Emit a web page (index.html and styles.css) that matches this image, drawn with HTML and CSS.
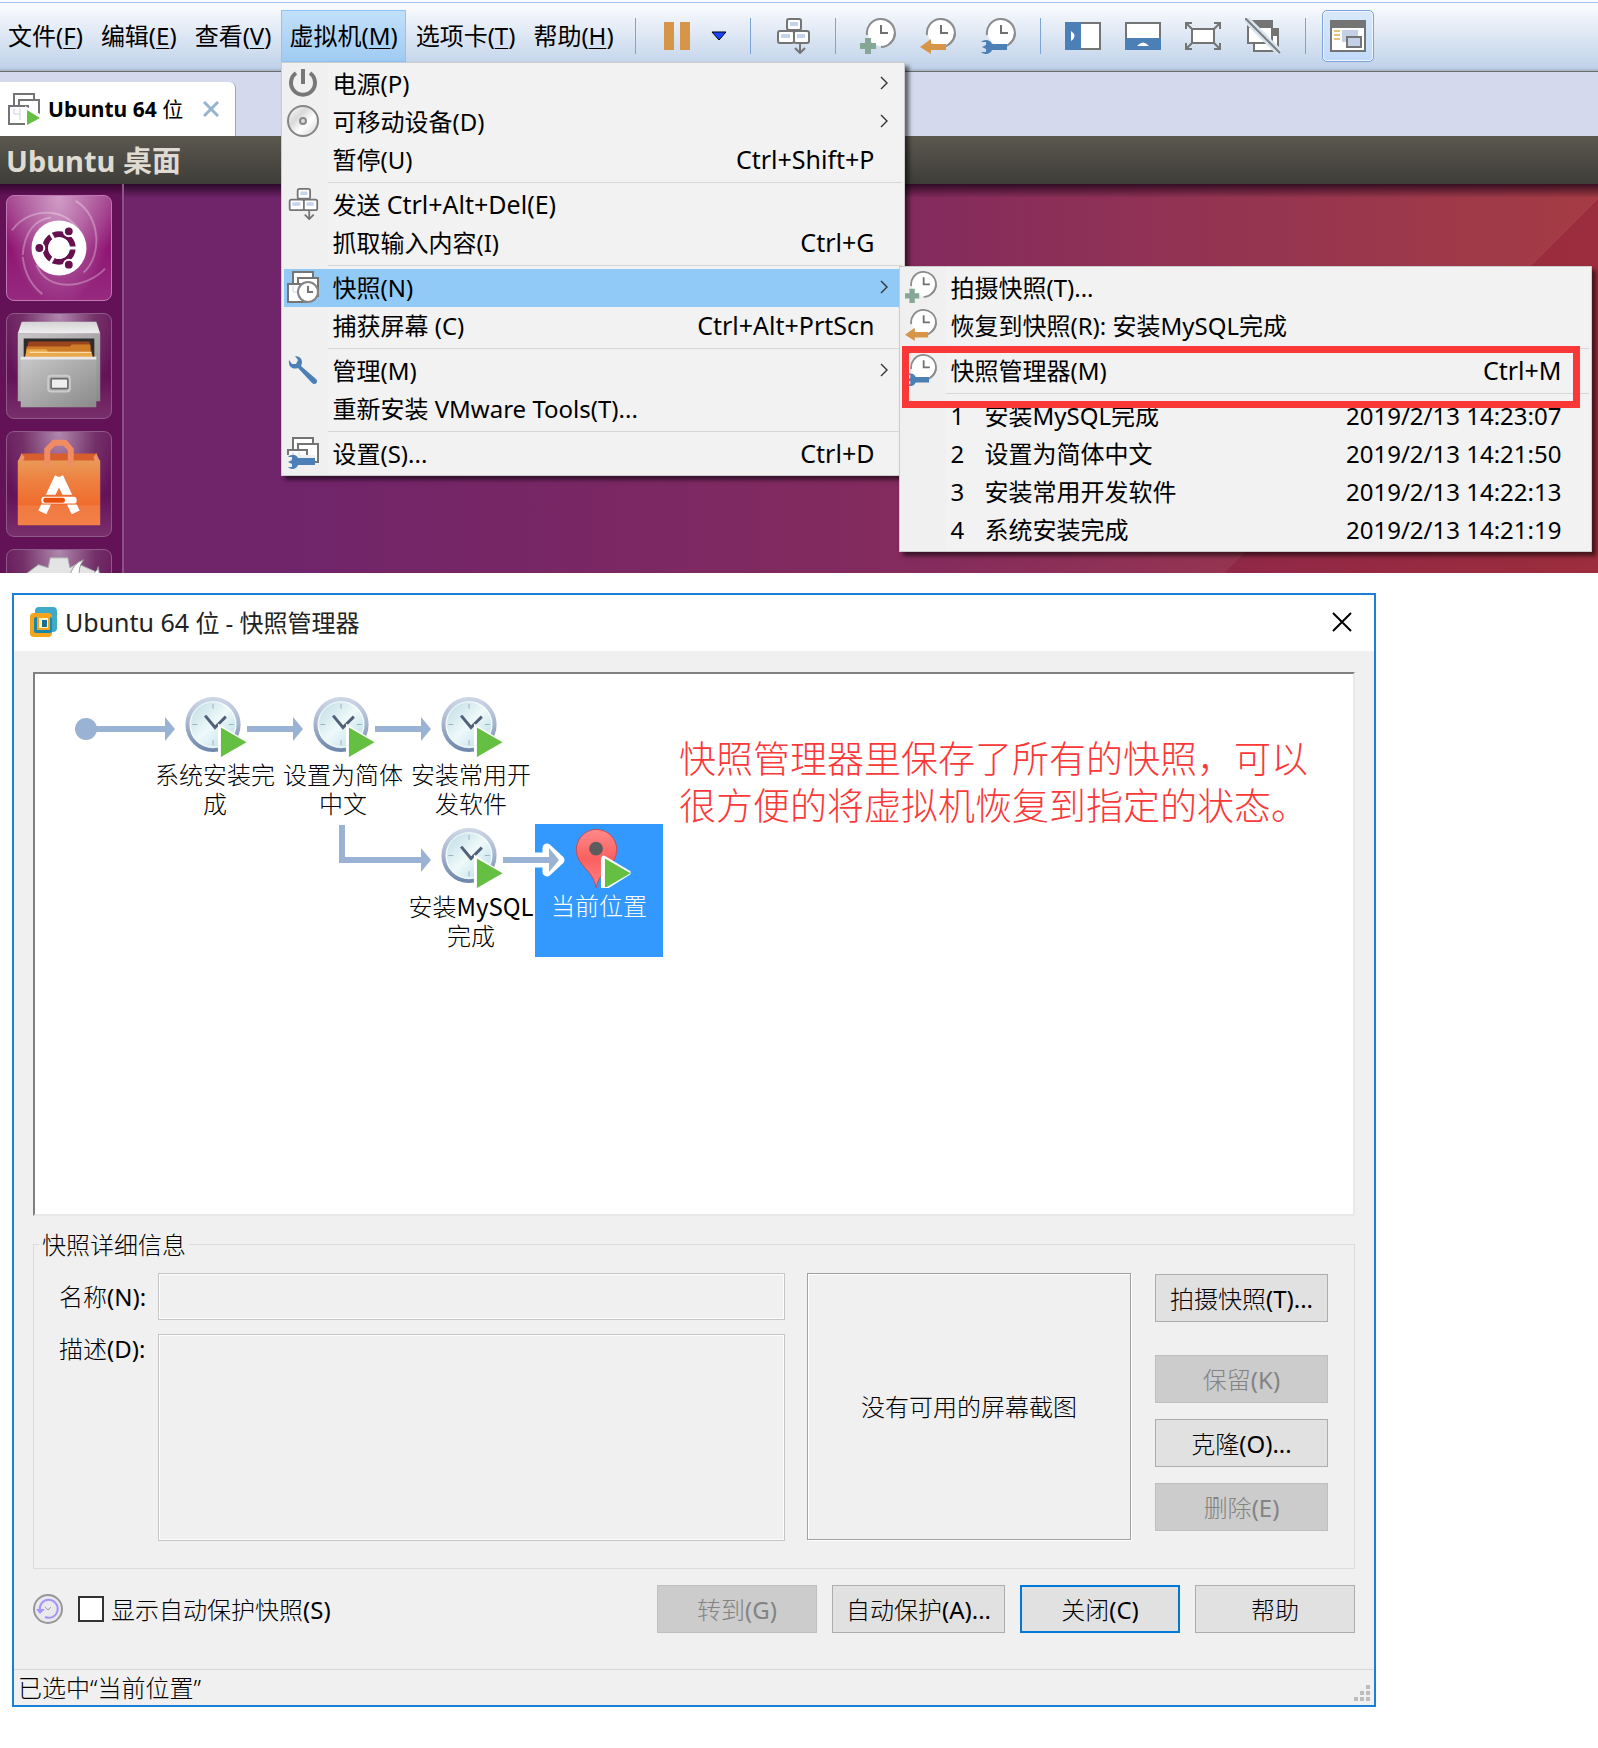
FILE: index.html
```html
<!DOCTYPE html>
<html lang="zh-CN">
<head>
<meta charset="utf-8">
<title>Ubuntu 64 位 - 快照管理器</title>
<link rel="stylesheet" href="styles.css">
</head>
<body>
<svg class="defs" aria-hidden="true">
  <defs>
    <linearGradient id="glass" x1="0" y1="0" x2="1" y2="1"><stop offset="0" stop-color="#b4d6e0"/><stop offset=".5" stop-color="#eef9fa"/><stop offset="1" stop-color="#aed7e2"/></linearGradient>
    <linearGradient id="rim" x1="0" y1="0" x2="0" y2="1"><stop offset="0" stop-color="#ccd6e6"/><stop offset=".45" stop-color="#a9b7ce"/><stop offset="1" stop-color="#6f87ad"/></linearGradient>
    <linearGradient id="pin" x1="0" y1="0" x2="0" y2="1"><stop offset="0" stop-color="#ff8a8a"/><stop offset=".5" stop-color="#fb6060"/><stop offset="1" stop-color="#ff8080"/></linearGradient>
    <linearGradient id="metal" x1="0" y1="0" x2="1" y2="1"><stop offset="0" stop-color="#c8c8c8"/><stop offset="1" stop-color="#8a8a8a"/></linearGradient>
    <linearGradient id="lid" x1="0" y1="0" x2="0" y2="1"><stop offset="0" stop-color="#d4d4d4"/><stop offset="1" stop-color="#f0f0f0"/></linearGradient>
    <linearGradient id="bag" x1="0" y1="0" x2="0" y2="1"><stop offset="0" stop-color="#e99a58"/><stop offset=".3" stop-color="#ee8141"/><stop offset=".68" stop-color="#ef6c2c"/><stop offset=".7" stop-color="#f07a40"/><stop offset="1" stop-color="#f38048"/></linearGradient>
    <linearGradient id="disc" x1="0" y1="0" x2="1" y2="1"><stop offset="0" stop-color="#fff"/><stop offset=".35" stop-color="#d9d9d9"/><stop offset=".6" stop-color="#fff"/><stop offset="1" stop-color="#d0d0d0"/></linearGradient>
  </defs>
  <symbol id="i-clock" viewBox="0 0 36 36">
    <circle cx="21" cy="15" r="13" fill="#fff"/>
    <path d="M7 17A14 14 0 1 1 21 29" fill="none" stroke="#8c8c8c" stroke-width="2"/>
    <path d="M35 15A14 14 0 0 1 29 26" fill="none" stroke="#8c8c8c" stroke-width="2"/>
    <path d="M21 7V15H28" fill="none" stroke="#707070" stroke-width="2"/>
  </symbol>
  <symbol id="i-take" viewBox="0 0 36 36">
    <use href="#i-clock"/><path d="M0 28H16M8 20V36" stroke="#86a796" stroke-width="6" fill="none"/>
  </symbol>
  <symbol id="i-revert" viewBox="0 0 36 36">
    <use href="#i-clock"/><path d="M0 29L11 21V26H26V32H11V36Z" fill="#d7954a"/>
  </symbol>
  <symbol id="i-manager" viewBox="0 0 36 36">
    <use href="#i-clock"/><path d="M1 24C4 21 10 21 12 26H27V32H12C10 37 4 37 1 34H6V31L2 29L6 27V24Z" fill="#4b7fb5"/>
  </symbol>
  <symbol id="i-keys" viewBox="0 0 36 36">
    <g fill="#fff" stroke="#747474" stroke-width="2"><rect x="12" y="1" width="14" height="11" rx="2"/><rect x="3" y="13" width="16" height="12" rx="2"/><rect x="19" y="13" width="15" height="12" rx="2"/></g>
    <path d="M15 6H23M6 18H15M22 18H30" stroke="#c5d4eb" stroke-width="4"/>
    <path d="M25 26V34M20 30L25 35L30 30" fill="none" stroke="#747474" stroke-width="2"/>
  </symbol>
  <symbol id="i-boxes" viewBox="0 0 32 32">
    <g fill="#fff" stroke="#747474" stroke-width="2"><rect x="6" y="1" width="20" height="16"/><rect x="11" y="7" width="20" height="18"/><rect x="1" y="13" width="19" height="18"/></g>
    <path d="M6 15V21H12M12 15V27" fill="none" stroke="#c5d4eb" stroke-width="1"/>
  </symbol>
  <symbol id="i-clocknode" viewBox="0 0 128 68">
    <circle cx="62" cy="32" r="26" fill="url(#glass)" stroke="url(#rim)" stroke-width="4"/>
    <circle cx="62" cy="32" r="23" fill="none" stroke="#fff" stroke-width="1" opacity=".8"/>
    <path d="M62 11V16M62 48V53M41 32H46M78 32H83" stroke="#9db0c0" stroke-width="1"/>
    <path d="M54 23L64 35L75 24" fill="none" stroke="#526079" stroke-width="3"/>
    <path d="M67 31L98 50L80 64H67Z" fill="#fff"/><path d="M70 35L96 50L70 65Z" fill="#64bf43"/>
  </symbol>
  <symbol id="i-chev" viewBox="0 0 8 14"><path d="M1 1L7 7L1 13" fill="none" stroke="#333" stroke-width="1.4"/></symbol>
</svg>

<div class="vm">
  <header class="topbar">
    <nav class="menubar">
      <div class="menu"><button>文件(<u>F</u>)</button></div>
      <div class="menu"><button>编辑(<u>E</u>)</button></div>
      <div class="menu"><button>查看(<u>V</u>)</button></div>
      <div class="menu"><button class="open">虚拟机(<u>M</u>)</button>
        <ul class="popup popup-main">
          <li><button><span class="ico"><svg viewBox="0 0 32 32"><path d="M9 6A12 12 0 1 0 23 6" fill="none" stroke="#777" stroke-width="4"/><path d="M16 2V17" stroke="#777" stroke-width="4"/></svg></span><span class="txt">电源(P)</span><svg class="chev"><use href="#i-chev"/></svg></button></li>
          <li><button><span class="ico"><svg viewBox="0 0 32 32"><circle cx="16" cy="16" r="15" fill="url(#disc)" stroke="#858585" stroke-width="2"/><circle cx="16" cy="16" r="3" fill="#ddd" stroke="#888" stroke-width="2"/></svg></span><span class="txt">可移动设备(D)</span><svg class="chev"><use href="#i-chev"/></svg></button></li>
          <li><button><span class="ico"></span><span class="txt">暂停(U)</span><kbd>Ctrl+Shift+P</kbd></button></li>
          <li class="line"></li>
          <li><button><span class="ico"><svg><use href="#i-keys"/></svg></span><span class="txt">发送 <kbd>Ctrl+Alt+Del(E)</kbd></span></button></li>
          <li><button><span class="ico"></span><span class="txt">抓取输入内容(I)</span><kbd>Ctrl+G</kbd></button></li>
          <li class="line"></li>
          <li class="sub"><button class="hot"><span class="ico"><svg viewBox="0 0 32 32"><use href="#i-boxes" width="32" height="32"/><circle cx="21" cy="21" r="10" fill="#fff" stroke="#858585" stroke-width="2"/><path d="M21 15V21H26" fill="none" stroke="#747474" stroke-width="2"/></svg></span><span class="txt">快照(N)</span><svg class="chev"><use href="#i-chev"/></svg></button>
            <ul class="popup popup-sub">
              <li><button><span class="ico"><svg><use href="#i-take"/></svg></span><span class="txt">拍摄快照(T)...</span></button></li>
              <li><button><span class="ico"><svg><use href="#i-revert"/></svg></span><span class="txt">恢复到快照(R): 安装MySQL完成</span></button></li>
              <li class="line"></li>
              <li><button><span class="ico"><svg><use href="#i-manager"/></svg></span><span class="txt">快照管理器(M)</span><kbd>Ctrl+M</kbd></button></li>
              <li class="line"></li>
              <li><button><span class="ico"></span><span class="num">1</span><span class="txt">安装MySQL完成</span><time>2019/2/13 14:23:07</time></button></li>
              <li><button><span class="ico"></span><span class="num">2</span><span class="txt">设置为简体中文</span><time>2019/2/13 14:21:50</time></button></li>
              <li><button><span class="ico"></span><span class="num">3</span><span class="txt">安装常用开发软件</span><time>2019/2/13 14:22:13</time></button></li>
              <li><button><span class="ico"></span><span class="num">4</span><span class="txt">系统安装完成</span><time>2019/2/13 14:21:19</time></button></li>
              <li class="redbox" aria-hidden="true"></li>
            </ul>
          </li>
          <li><button><span class="ico"></span><span class="txt">捕获屏幕 (C)</span><kbd>Ctrl+Alt+PrtScn</kbd></button></li>
          <li class="line"></li>
          <li><button><span class="ico"><svg viewBox="0 0 32 32"><path d="M8 2L11 6L9 10L5 10L2 6C1 13 6 16 11 14L25 29C28 32 32 28 29 25L14 12C17 6 13 2 8 2Z" fill="#4b7fb5"/></svg></span><span class="txt">管理(M)</span><svg class="chev"><use href="#i-chev"/></svg></button></li>
          <li><button><span class="ico"></span><span class="txt">重新安装 VMware Tools(T)...</span></button></li>
          <li class="line"></li>
          <li><button><span class="ico"><svg viewBox="0 0 32 32"><use href="#i-boxes" width="32" height="32"/><path d="M0 18H28V32H0Z" fill="#f0f0f0"/><path d="M1 20C4 17 9 17 11 21H28V28H11C9 33 4 33 1 30H5V27L1 25L5 23V20Z" fill="#4b7fb5"/></svg></span><span class="txt">设置(S)...</span><kbd>Ctrl+D</kbd></button></li>
        </ul>
      </div>
      <div class="menu"><button>选项卡(<u>T</u>)</button></div>
      <div class="menu"><button>帮助(<u>H</u>)</button></div>
    </nav>
    <div class="tools">
      <i class="sep"></i>
      <button class="tool pause" aria-label="暂停"><svg viewBox="0 0 66 36"><path d="M4 4H14V32H4ZM20 4H30V32H20Z" fill="#d7954a"/><path d="M52 14H66L59 22Z" fill="#1b46ff" stroke="#000" stroke-width="1"/></svg></button>
      <i class="sep"></i>
      <button class="tool" aria-label="发送按键"><svg><use href="#i-keys"/></svg></button>
      <i class="sep"></i>
      <button class="tool" aria-label="拍摄快照"><svg><use href="#i-take"/></svg></button>
      <button class="tool" aria-label="恢复快照"><svg><use href="#i-revert"/></svg></button>
      <button class="tool" aria-label="管理快照"><svg><use href="#i-manager"/></svg></button>
      <i class="sep"></i>
      <button class="tool" aria-label="显示库"><svg viewBox="0 0 36 36"><path d="M1 5H35V31H1Z" fill="#fff" stroke="#747474" stroke-width="2"/><path d="M0 4H16V32H0Z" fill="#4b7fb5"/><path d="M6 13Q13 18 6 23Z" fill="#fff"/></svg></button>
      <button class="tool" aria-label="缩略图栏"><svg viewBox="0 0 36 36"><path d="M1 5H35V31H1Z" fill="#fff" stroke="#747474" stroke-width="2"/><path d="M0 20H36V32H0Z" fill="#4b7fb5"/><path d="M12 28Q18 21 24 28Z" fill="#fff"/></svg></button>
      <button class="tool" aria-label="全屏"><svg viewBox="0 0 36 36"><path d="M7 11H29V25H7Z" fill="#fff" stroke="#747474" stroke-width="2"/><path d="M1 11V5H7M1 5L7 11M29 5H35V11M35 5L29 11M1 25V31H7M1 31L7 25M35 25V31H29M35 31L29 25" fill="none" stroke="#747474" stroke-width="2"/></svg></button>
      <button class="tool" aria-label="Unity"><svg viewBox="0 0 36 36"><path d="M9 12H33V33H9Z" fill="#fff" stroke="#747474" stroke-width="2"/><path d="M26 10H34V18H26Z" fill="#747474"/><path d="M3 3H27V25H3Z" fill="#fff" stroke="#747474" stroke-width="2"/><path d="M2 2H28V10H2Z" fill="#747474"/><path d="M0 0L35 35" stroke="#d8e4f2" stroke-width="7"/><path d="M0 0L35 35" stroke="#7e7e7e" stroke-width="2"/></svg></button>
      <i class="sep"></i>
      <button class="tool active" aria-label="控制台视图"><svg viewBox="0 0 36 36"><path d="M1 3H35V33H1Z" fill="#fff" stroke="#747474" stroke-width="2"/><path d="M0 2H36V10H0Z" fill="#747474"/><path d="M4 13H10M4 17H10M4 21H10" stroke="#e5c478" stroke-width="2"/><path d="M12 12H28V24H12Z" fill="#c3d0e6"/><path d="M17 19H31V29H17Z" fill="#c3d0e6" stroke="#747474" stroke-width="2"/></svg></button>
    </div>
  </header>

  <div class="tabs">
    <div class="tab">
      <svg class="tabico" viewBox="0 0 32 32"><use href="#i-boxes" width="32" height="32"/><path d="M17 13L32 21V32H17Z" fill="#fff"/><path d="M19 17L32 25L19 32Z" fill="#64bf43"/></svg>
      <span class="tabname"><b>Ubuntu 64</b> 位</span>
      <button class="tabx" aria-label="关闭标签"><svg viewBox="0 0 16 16"><path d="M1 1L15 15M15 1L1 15" stroke="#94b4d0" stroke-width="3"/></svg></button>
    </div>
  </div>

  <div class="panel">Ubuntu 桌面</div>
  <section class="desktop">
    <aside class="launcher">
      <button class="tile dash" aria-label="Dash"><svg viewBox="0 0 106 106"><g fill="none" stroke="#fff" stroke-opacity=".3" stroke-width="2"><path d="M5 35C25 8 70 10 80 50M70 5C95 20 98 60 78 78M16 60C18 35 30 24 45 22M16 62C18 80 26 92 36 100M30 70C40 98 80 95 100 74"/></g><circle cx="53" cy="53" r="28" fill="#fff"/><circle cx="53" cy="53" r="14" fill="none" stroke="#65104f" stroke-width="6"/><g stroke="#fff" stroke-width="3"><path d="M53 53H74M53 53L43 36M53 53L43 70"/></g><circle cx="53" cy="53" r="11" fill="#fff"/><g fill="#65104f" stroke="#fff" stroke-width="2"><circle cx="33" cy="53" r="5"/><circle cx="63" cy="36" r="5"/><circle cx="63" cy="70" r="5"/></g></svg></button>
      <button class="tile" aria-label="文件"><svg viewBox="0 0 106 106"><path d="M11 20H95V89H11Z" fill="url(#metal)"/><path d="M15 8H91L95 20H11Z" fill="url(#lid)"/><path d="M17 25H89V46H17Z" fill="#2e2b2a"/><path d="M22 28H84L88 46H18Z" fill="#9c451c"/><path d="M20 33H64L66 31H85V46H19Z" fill="#cf7c26"/><path d="M20 36H40L42 39H86L88 46H18Z" fill="#eaa84c"/><path d="M23 39H86" stroke="#fff0c8" stroke-width="1"/><path d="M14 45H91V95H14Z" fill="url(#metal)"/><path d="M14 45H91" stroke="#e8e8e8" stroke-width="3"/><rect x="42" y="63" width="22" height="16" rx="3" fill="#aaa" stroke="#ccc" stroke-width="2"/><rect x="45" y="66" width="17" height="10" rx="1" fill="#eee" stroke="#666" stroke-width="1.500"/></svg></button>
      <button class="tile" aria-label="Ubuntu 软件"><svg viewBox="0 0 106 106"><path d="M14 22H92L90 30H16Z" fill="#d85f2d"/><path d="M11 30L15 22L18 26L16 30ZM95 30L91 22L88 26L90 30Z" fill="#f09468"/><path d="M11 29H95V95H11Z" fill="url(#bag)"/><path d="M41 35V18L48 11H59L65 18V35" fill="none" stroke="#ef8c64" stroke-width="6"/><path d="M53 46L36 82M53 46L70 82" fill="none" stroke="#fff" stroke-width="9" stroke-linejoin="bevel"/><rect x="34" y="64" width="38" height="10" fill="#ef6f30"/><rect x="35" y="66" width="36" height="7" rx="3" fill="#fff"/><rect x="37" y="67" width="22" height="5" rx="2" fill="#e94e0c"/></svg></button>
      <button class="tile" aria-label="系统设置"><svg viewBox="0 0 106 106"><path d="M20 24L32 15L42 18L44 8H62L64 18L72 14L90 22L95 30V60H15Z" fill="#e4e4e4" stroke="#aaa" stroke-width="1"/><path d="M64 28Q66 14 78 10Q72 18 74 28" fill="#fff" stroke="#999"/><path d="M80 28Q92 24 93 17L95 30Z" fill="#fff" stroke="#999"/></svg></button>
    </aside>
  </section>
</div>

<main class="dialog">
  <header class="titlebar">
    <svg class="logo" viewBox="0 0 30 32"><rect x="6" y="1" width="22" height="25" rx="4" fill="#3fa9c8"/><rect x="1" y="7" width="22" height="24" rx="4" fill="#f4a51c"/><rect x="5" y="11" width="18" height="16" rx="2" fill="#1b86ad"/><rect x="9" y="11" width="11" height="12" fill="#fff3d0" stroke="#f4a51c" stroke-width="2"/><rect x="13" y="14" width="5" height="7" fill="#176f96"/></svg>
    <h1><span class="lead">Ubuntu 64</span> 位 - 快照管理器</h1>
    <button class="close" aria-label="关闭"><svg viewBox="0 0 20 20"><path d="M1 1L19 19M19 1L1 19" stroke="#000" stroke-width="2"/></svg></button>
  </header>
  <div class="content">
    <section class="canvas">
      <button class="node n1"><svg><use href="#i-clocknode"/></svg><span>系统安装完</span><span>成</span></button>
      <button class="node n2"><svg><use href="#i-clocknode"/></svg><span>设置为简体</span><span>中文</span></button>
      <button class="node n3"><svg><use href="#i-clocknode"/></svg><span>安装常用开</span><span>发软件</span></button>
      <button class="node n4"><svg><use href="#i-clocknode"/></svg><span>安装<span class="latin">MySQL</span></span><span>完成</span></button>
      <button class="node n5 selected"><svg viewBox="0 0 128 68"><path d="M61 65C59 47 41 43 41 26A20 20 0 0 1 82 26C82 43 64 47 61 65Z" fill="url(#pin)" stroke="#c74a50" stroke-width="1"/><circle cx="61" cy="25" r="7" fill="#5c5c5c"/><path d="M66 65V36Q67 30 71 33L96 48V51L74 65Z" fill="#fff"/><path d="M70 35L96 50L72 64H70Z" fill="#64bf43"/></svg><span>当前位置</span></button>
      <svg class="links" viewBox="0 0 640 260" aria-hidden="true">
        <path d="M500 183H512V174L525 186L512 198V189H500Z" fill="#fff" stroke="#fff" stroke-width="9" stroke-linejoin="round"/>
        <g fill="none" stroke="#9ab2d3" stroke-width="6"><path d="M51 55H131M212 55H259M340 55H387M307 151V186H387M468 186H515"/></g>
        <g fill="#9ab2d3"><circle cx="51" cy="55" r="11"/><path d="M130 43L140 55L130 67ZM258 43L268 55L258 67ZM386 43L396 55L386 67ZM386 174L396 186L386 198ZM514 174L524 186L514 198Z"/></g>
      </svg>
      <p class="note">快照管理器里保存了所有的快照，可以<br>很方便的将虚拟机恢复到指定的状态。</p>
    </section>

    <fieldset class="details">
      <legend>快照详细信息</legend>
      <div class="fields">
        <label for="name">名称<span class="key">(N):</span></label><input id="name" type="text" readonly>
        <label for="desc" class="top">描述<span class="key">(D):</span></label><textarea id="desc" readonly></textarea>
      </div>
      <div class="preview">没有可用的屏幕截图</div>
      <div class="actions">
        <button class="btn first">拍摄快照<span class="key">(T)...</span></button>
        <button class="btn" disabled>保留<span class="key">(K)</span></button>
        <button class="btn">克隆<span class="key">(O)...</span></button>
        <button class="btn" disabled>删除<span class="key">(E)</span></button>
      </div>
    </fieldset>

    <div class="foot">
      <svg class="auto" viewBox="0 0 30 30"><circle cx="15" cy="15" r="14" fill="#e9e9ee" stroke="#979797" stroke-width="2"/><path d="M7 17A9 9 0 1 1 12 23" fill="none" stroke="#a596fa" stroke-width="2"/><path d="M3 15H12L7 20Z" fill="#a596fa"/><path d="M12 13L15 16L18 13" fill="none" stroke="#999"/></svg>
      <label class="check"><input type="checkbox"><span>显示自动保护快照<span class="key">(S)</span></span></label>
      <button class="btn" disabled>转到<span class="key">(G)</span></button>
      <button class="btn wide">自动保护<span class="key">(A)...</span></button>
      <button class="btn default">关闭<span class="key">(C)</span></button>
      <button class="btn">帮助</button>
    </div>
  </div>
  <footer class="status"><span>已选中“当前位置”</span><svg class="grip" viewBox="0 0 16 16"><path d="M12 0H16V4H12ZM6 6H10V10H6ZM12 6H16V10H12ZM0 12H4V16H0ZM6 12H10V16H6ZM12 12H16V16H12Z" fill="#bdbdbd"/></svg></footer>
</main>
</body>
</html>
```
FILE: styles.css
```css
* { box-sizing: border-box; }
body {
  margin: 0;
  background: #fff;
  color: #000;
  font: 24px/29px "Noto Sans", "Noto Sans CJK SC", sans-serif;
}
button, input, textarea { font: inherit; color: inherit; }
button { border: 0; padding: 0; background: none; }
ul { list-style: none; margin: 0; padding: 0; }
svg { display: block; }
.defs { position: absolute; width: 0; height: 0; }

/* Menu bar and toolbar */
.vm { padding-top: 2px; }
.topbar {
  display: flex;
  height: 70px;
  padding-top: 7px;
  border-top: 1px solid #9cc3e6;
  border-bottom: 1px solid #6b6b6b;
  background: linear-gradient(#fbfcfe, #c1d3ea 64px, #bccfe6 65px, #a4b3c8);
}
.menubar { display: flex; gap: 2px; white-space: nowrap; }
.menu { position: relative; }
.menu > button { height: 52px; padding: 0 7px 2px; border: 1px solid transparent; }
.menu > button.open { border-color: #8cc4f4; background: linear-gradient(#c2e0fb, #a0cbf2); }
u { text-decoration-thickness: 1px; text-underline-offset: 3px; }
.tools { display: flex; align-items: center; gap: 24px; height: 52px; margin-left: 13px; }
.sep { width: 1px; height: 36px; background: #7ba5d4; }
.tool svg { width: 36px; height: 36px; }
.pause svg { width: 66px; }
.tool.active {
  width: 52px;
  height: 52px;
  margin-left: -8px;
  padding: 0 7px;
  border: 1px solid #7ba5d8;
  border-radius: 5px;
  background: linear-gradient(#d9e9fa, #c2dafb);
  box-shadow: inset 0 0 0 1px #eef5fd;
}

/* Drop-down menus */
.popup {
  position: absolute;
  z-index: 2;
  padding: 2px;
  border: 1px solid #ccc;
  background: linear-gradient(90deg, #f0f0f0 46px, #f2f2f2 46px);
  box-shadow: 4px 4px 4px rgba(0, 0, 0, .55);
}
.popup-main { top: 52px; left: 0; width: 624px; }
.popup-sub { top: -3px; left: 615px; width: 693px; }
.popup button { display: flex; align-items: center; width: 100%; height: 38px; padding: 0 28px 2px 0; text-align: left; }
.popup .hot { background: #91c9f7; }
.ico { flex: none; width: 48px; padding-left: 3px; }
.ico svg { width: 32px; height: 32px; }
.num { width: 34px; }
.txt { flex: 1; }
kbd { font-family: inherit; font-size: 25px; }
.chev { width: 8px; height: 14px; margin-right: -14px; }
.line { height: 7px; padding: 3px 0 3px 44px; background: #d7d7d7 content-box; }
.sub { position: relative; }
.redbox { position: absolute; top: 79px; left: 2px; width: 678px; height: 62px; border: 7px solid #fb3838; }

/* Tabs and guest desktop */
.tabs { display: flex; height: 64px; padding-top: 10px; background: #d4d9ed; }
.tab {
  display: flex;
  align-items: center;
  gap: 8px;
  padding: 0 16px 0 8px;
  border-right: 1px solid #8fa9c5;
  border-radius: 0 6px 0 0;
  background: #fff;
}
.tabname { white-space: nowrap; font-size: 21px; }
.tabico { width: 32px; height: 32px; }
.tabx { margin-left: 12px; }
.tabx svg { width: 16px; height: 16px; }
.panel {
  height: 48px;
  padding-left: 6px;
  background: linear-gradient(#5b5850, #3e3d38);
  color: #dfdbd2;
  font-size: 29px;
  font-weight: 700;
  line-height: 50px;
}
.desktop {
  height: 389px;
  overflow: hidden;
  background:
    linear-gradient(rgba(20, 0, 20, .75), transparent 14px),
    linear-gradient(-45deg, rgba(130, 0, 40, .25) 264px, transparent 264px),
    linear-gradient(90deg, #70246a 18%, #842b5e 57%, #943452 76%, #a53c44);
}
.launcher {
  display: flex;
  flex-direction: column;
  gap: 12px;
  width: 124px;
  height: 100%;
  padding: 11px 0 0 6px;
  border-right: 2px solid #8b5287;
  background: linear-gradient(rgba(20, 0, 20, .6), transparent 12px), #641258;
}
.tile {
  flex: none;
  width: 106px;
  height: 106px;
  border: 1px solid #8d5a88;
  border-radius: 8px;
  background: radial-gradient(ellipse at 50% 0, #b088ae, #733068 50%, transparent 75%), linear-gradient(#6d1f60, #641258 60%, #792f6c);
}
.tile svg { width: 104px; height: 104px; }
.dash { border-color: #c277b3; background: radial-gradient(ellipse at 50% 0, #d09cc6, transparent 75%), linear-gradient(#a3448f, #8f1673 50%, #962a7f); }

/* Snapshot manager */
.dialog { max-width: 1364px; margin: 20px 12px 40px; border: 2px solid #1a80d6; background: #f0f0f0; }
.titlebar { display: flex; align-items: center; height: 56px; padding: 0 22px 2px 15px; background: #fff; }
.logo { width: 30px; height: 32px; margin-right: 6px; }
h1 { flex: 1; margin: 0; font-size: 24px; font-weight: 400; color: #222; }
.lead { font-size: 25px; }
.close svg { width: 20px; height: 20px; }
.content { padding: 21px 19px 36px; font-weight: 300; }
.canvas {
  position: relative;
  height: 544px;
  border: 2px solid;
  border-color: #808080 #e8e8e8 #e8e8e8 #808080;
  background: #fff;
}
.node {
  position: absolute;
  display: flex;
  flex-direction: column;
  align-items: center;
  justify-content: flex-start;
  width: 128px;
  height: 133px;
  white-space: nowrap;
}
.node svg { flex: none; width: 128px; height: 67px; }
.n1 { left: 116px; top: 19px; }
.n2 { left: 244px; top: 19px; }
.n3 { left: 372px; top: 19px; }
.n4 { left: 372px; top: 150px; }
.n5 { left: 500px; top: 150px; }
.latin { font-family: "Noto Sans CJK SC", sans-serif; font-weight: 400; }
.node.selected { background: #3399ff; color: #fff; }
.links { position: absolute; left: 0; top: 0; width: 640px; height: 260px; pointer-events: none; }
.note { position: absolute; left: 644px; top: 61px; margin: 0; color: #fb3838; font-size: 37px; line-height: 47px; white-space: nowrap; }

.details {
  display: flex;
  gap: 22px;
  margin: 14px 0 0;
  padding: 14px 26px 27px 25px;
  border: 1px solid #dcdcdc;
  min-width: 0;
}
.details legend { margin-left: -20px; padding: 0 3px; }
.key { font-weight: 400; }
.fields { flex: 1; display: grid; grid-template: 47px 207px / 90px 1fr; gap: 14px 9px; }
.fields label { padding-top: 9px; white-space: nowrap; }
.fields label.top { padding-top: 0; }
input[type="text"], textarea { width: 100%; height: 100%; margin: 0; border: 1px solid #c6c6c6; box-shadow: inset 0 0 0 1px #fcfcfc; background: #f0f0f0; border-radius: 0; resize: none; outline: 0; }
.preview { display: flex; align-items: center; justify-content: center; width: 324px; height: 267px; border: 1px solid #a0a0a0; box-shadow: 1px 1px 0 #fff, inset 1px 1px 0 #fff; }
.actions { display: flex; flex-direction: column; gap: 16px; width: 173px; padding-top: 1px; margin-left: 2px; }
.btn { height: 48px; border: 1px solid #adadad; background: #e1e1e1; white-space: nowrap; }
.btn.first { margin-bottom: 17px; }
.btn:disabled { border-color: #bfbfbf; background: #ccc; color: #838383; }
.btn.default { border: 2px solid #0078d7; }
.foot { display: flex; align-items: center; gap: 15px; margin-top: 16px; }
.foot .btn { width: 160px; }
.foot .btn.wide { width: 173px; }
.auto { width: 30px; height: 30px; }
.check { flex: 1; display: flex; align-items: center; gap: 7px; }
.check input { appearance: none; width: 26px; height: 26px; margin: 0; border: 2px solid #333; background: #fff; }
.status { display: flex; align-items: center; height: 36px; padding: 0 4px; border-top: 1px solid #d7d7d7; font-weight: 300; }
.grip { width: 16px; height: 16px; margin-left: auto; align-self: flex-end; margin-bottom: 4px; }
```
